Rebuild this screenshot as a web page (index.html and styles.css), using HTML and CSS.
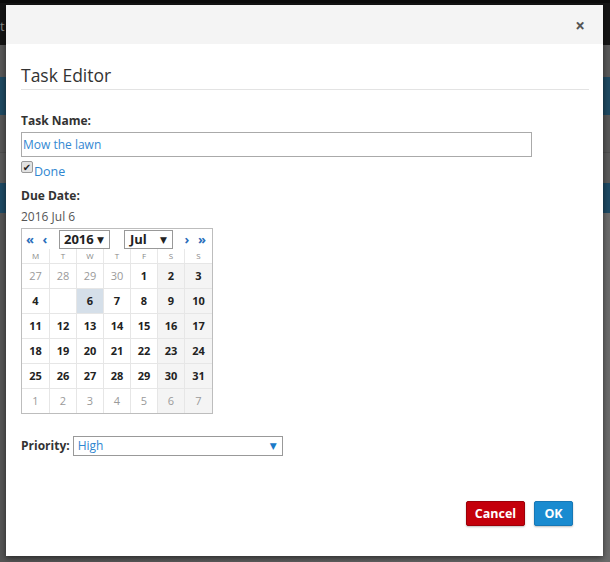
FILE: index.html
```html
<!DOCTYPE html>
<html>
<head>
<meta charset="utf-8">
<link rel="stylesheet" href="styles.css">
</head>
<body>
<div class="page">
  <div class="bg-nav"><span class="bg-t">t</span></div>
  <div class="bg-row gray"></div>
  <div class="bg-row blue"></div>
  <div class="bg-row gray2"></div>
  <div class="bg-row gray3"></div>
  <div class="bg-row blue small"></div>
  <div class="bg-rest"></div>
</div>

<div class="modal">
  <div class="modal-head"><span class="close">×</span></div>
  <div class="modal-body">
    <h1 class="title">Task Editor</h1>
    <div class="label first">Task Name:</div>
    <div class="input">Mow the lawn</div>
    <div class="check-row"><span class="check">✔</span><span class="done">Done</span></div>
    <div class="label due">Due Date:</div>
    <div class="date-text">2016 Jul 6</div>
    <div class="cal">
      <div class="cal-head">
        <span class="nav">«</span><span class="nav">‹</span>
        <span class="sel year">2016 <i>▼</i></span>
        <span class="sel month">Jul <i>▼</i></span>
        <span class="nav r">›</span><span class="nav">»</span>
      </div>
      <div class="grid dow">
        <span>M</span><span>T</span><span>W</span><span>T</span><span>F</span><span>S</span><span>S</span>
      </div>
      <div class="grid days">
        <span class="o">27</span><span class="o">28</span><span class="o">29</span><span class="o">30</span><span>1</span><span class="we">2</span><span class="we">3</span>
        <span>4</span><span class="blank"></span><span class="selected">6</span><span>7</span><span>8</span><span class="we">9</span><span class="we">10</span>
        <span>11</span><span>12</span><span>13</span><span>14</span><span>15</span><span class="we">16</span><span class="we">17</span>
        <span>18</span><span>19</span><span>20</span><span>21</span><span>22</span><span class="we">23</span><span class="we">24</span>
        <span>25</span><span>26</span><span>27</span><span>28</span><span>29</span><span class="we">30</span><span class="we">31</span>
        <span class="o">1</span><span class="o">2</span><span class="o">3</span><span class="o">4</span><span class="o">5</span><span class="o we">6</span><span class="o we">7</span>
      </div>
    </div>
    <div class="prio-row">
      <span class="label inline">Priority:</span>
      <span class="prio-sel">High<i>▼</i></span>
    </div>
    <div class="footer">
      <button class="btn cancel">Cancel</button>
      <button class="btn ok">OK</button>
    </div>
  </div>
</div>
</body>
</html>
```

FILE: styles.css
```css
html, body {
  margin: 0;
  padding: 0;
}
body {
  width: 610px;
  height: 562px;
  overflow: hidden;
  background: #5c5c5c;
  font-family: "Open Sans", "DejaVu Sans", sans-serif;
  position: relative;
}
.page {
  display: flex;
  flex-direction: column;
  height: 562px;
}
.bg-nav {
  height: 42px;
  background: #151515;
  border-top: 3px solid #0c0c0c;
  color: #8a8a8a;
  font-size: 13px;
}
.bg-t {
  display: inline-block;
  margin-left: 0;
  margin-top: 14px;
}
.bg-row { height: 35px; }
.bg-row.gray { background: #585858; height: 32px; }
.bg-row.blue { background: #1f4a62; height: 38px; }
.bg-row.gray2 { background: #575757; height: 37px; border-bottom: 1px solid #4e4e4e; }
.bg-row.gray3 { background: #5a5a5a; height: 30px; }
.bg-row.small { height: 30px; background: #1e4a64; }
.bg-rest {
  flex: 1;
  background: linear-gradient(to right, #555 0%, #5f5f5f 50%, #6b6b6b 100%);
}

.modal {
  position: absolute;
  left: 6px;
  top: 5px;
  width: 597px;
  height: 551px;
  background: #fff;
  box-shadow: 0 2px 6px rgba(0,0,0,0.55);
  color: #333;
}
.modal-head {
  height: 39px;
  background: #f4f4f4;
  display: flex;
  justify-content: flex-end;
  align-items: center;
}
.close {
  font-weight: 700;
  font-size: 17px;
  color: #555;
  margin-right: 18px;
  margin-top: 2px;
}
.modal-body {
  padding: 17px 14px 0 15px;
}
.title {
  margin: 0;
  font-size: 17.5px;
  font-weight: 400;
  line-height: 28px;
  height: 28px;
  border-bottom: 1px solid #e3e3e3;
  color: #333;
}
.label {
  font-weight: 700;
  font-size: 12px;
  line-height: 18px;
  color: #333;
}
.label.first { margin-top: 22px; }
.input {
  margin-top: 2px;
  box-sizing: border-box;
  width: 511px;
  height: 25px;
  border: 1px solid #aaa;
  font-size: 12px;
  line-height: 23px;
  padding-left: 1px;
  color: #3388d2;
}
.check-row {
  display: flex;
  align-items: center;
  height: 18px;
  margin-top: 4px;
}
.check {
  box-sizing: border-box;
  width: 12px;
  height: 12px;
  border: 1px solid #999;
  border-radius: 2px;
  background: #e2e2e2;
  font-size: 10px;
  line-height: 10px;
  text-align: center;
  color: #222;
  margin-top: -6px;
}
.done {
  color: #2f86d0;
  font-size: 12.5px;
  margin-left: 1px;
  margin-top: 3px;
}
.label.due { margin-top: 8px; }
.date-text {
  margin-top: 3px;
  font-size: 12px;
  line-height: 18px;
  color: #555;
}
.cal {
  margin-top: 2px;
  width: 190px;
  border: 1px solid #bdbdbd;
}
.cal-head {
  height: 20px;
  display: flex;
  align-items: center;
  font-size: 13px;
  color: #2a6ebb;
}
.nav {
  font-weight: 700;
  width: 14px;
  text-align: center;
  margin-left: 1px;
}
.nav:first-child { margin-left: 1px; }
.sel {
  box-sizing: border-box;
  height: 19px;
  border: 1px solid #999;
  color: #222;
  font-weight: 700;
  font-size: 13px;
  line-height: 17px;
  padding-left: 4px;
  display: flex;
  justify-content: space-between;
  padding-right: 5px;
}
.sel i {
  font-style: normal;
  font-size: 9px;
}
.sel.year { width: 51px; margin-left: 7px; }
.sel.month { width: 49px; margin-left: 14px; padding-left: 5px; }
.nav.r { margin-left: 7px; }
.grid {
  display: grid;
  grid-template-columns: 27px 27px 27px 27px 27px 27px 28px;
}
.dow {
  height: 14px;
  font-size: 8px;
  color: #888;
  line-height: 14px;
}
.dow span {
  text-align: center;
  border-left: 1px solid #e8e8e8;
}
.dow span:first-child { border-left: none; }
.days span {
  box-sizing: border-box;
  height: 25px;
  border-left: 1px solid #e6e6e6;
  border-top: 1px solid #e6e6e6;
  text-align: center;
  line-height: 24px;
  font-size: 11px;
  font-weight: 700;
  color: #222;
  font-family: "Open Sans", "DejaVu Sans", sans-serif;
}
.days span:nth-child(7n+1) { border-left: none; }
.days span.o {
  color: #9a9a9a;
  font-weight: 400;
}
.days span.we { background: #f4f4f4; }
.days span.selected { background: #d5dfe9; }
.prio-row {
  margin-top: 22px;
  display: flex;
  align-items: center;
  height: 20px;
}
.label.inline { line-height: 20px; }
.prio-sel {
  box-sizing: border-box;
  margin-left: 3px;
  width: 210px;
  height: 20px;
  border: 1px solid #999;
  font-size: 12px;
  line-height: 18px;
  padding-left: 4px;
  padding-right: 5px;
  color: #2f86d0;
  display: flex;
  justify-content: space-between;
}
.prio-sel i {
  font-style: normal;
  font-size: 9px;
  color: #1a7ac8;
}
.footer {
  margin-top: 45px;
  display: flex;
  justify-content: flex-end;
  gap: 9px;
  padding-right: 16px;
}
.btn {
  box-sizing: border-box;
  height: 25px;
  font-family: "Open Sans", "DejaVu Sans", sans-serif;
  font-weight: 700;
  font-size: 12.5px;
  color: #fff;
  border-radius: 2px;
  padding: 0;
  box-shadow: 0 1px 2px rgba(0,0,0,0.25);
}
.cancel {
  width: 59px;
  background: #c4000b;
  border: 1px solid #9c0008;
}
.ok {
  width: 39px;
  background: #1a8bd0;
  border: 1px solid #1777b5;
}
```
